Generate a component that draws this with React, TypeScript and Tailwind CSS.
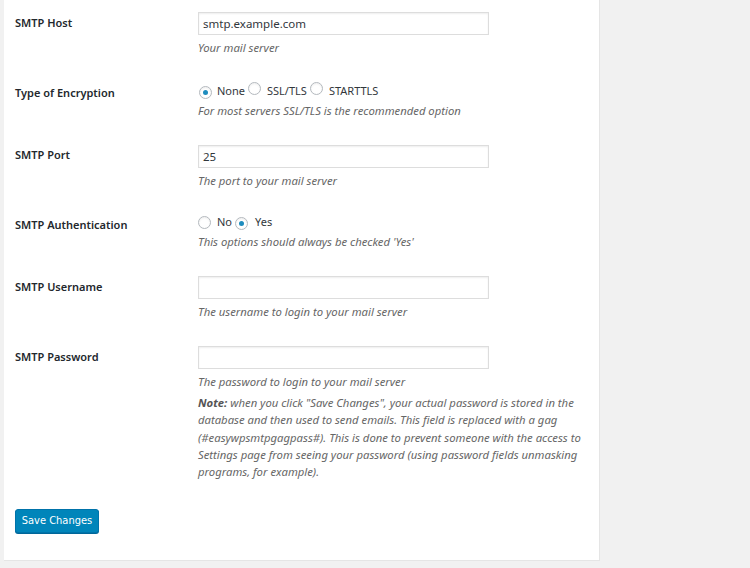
import React from "react";

const font = { fontFamily: '"Noto Sans", "Open Sans", sans-serif' };

function Radio({ checked }: { checked?: boolean }) {
  return (
    <span className="inline-flex items-center justify-center w-[13px] h-[13px] rounded-full border border-[#b4b9be] bg-white shadow-[inset_0_1px_2px_rgba(0,0,0,0.07)] shrink-0">
      {checked && <span className="w-[5px] h-[5px] rounded-full bg-[#1e8cbe]" />}
    </span>
  );
}

function Input({ value }: { value?: string }) {
  return (
    <div className="w-[291px] h-[23px] border border-[#dddddd] bg-white shadow-[inset_0_1px_2px_rgba(0,0,0,0.07)] flex items-center pl-[4px] text-[11.5px] text-[#32373c]">
      {value}
    </div>
  );
}

function Desc({ children, className = "" }: { children: React.ReactNode; className?: string }) {
  return <div className={`italic text-[11.3px] leading-[17px] text-[#666666] ${className}`}>{children}</div>;
}

function Label({ children, mt }: { children: React.ReactNode; mt: string }) {
  return (
    <div className={`w-[183px] shrink-0 font-semibold text-[11px] leading-[17px] text-[#23282d] ${mt}`}>{children}</div>
  );
}

export default function App() {
  return (
    <div className="w-[750px] h-[568px] bg-[#f1f1f1] overflow-hidden" style={font}>
      <div className="ml-[4px] w-[596px] h-[561px] bg-white border-r border-b border-[#e5e5e5] pl-[11px] pt-[12px]">
        {/* SMTP Host */}
        <div className="flex">
          <Label mt="mt-[2px]">SMTP Host</Label>
          <div>
            <Input value="smtp.example.com" />
            <Desc className="mt-[4px]">Your mail server</Desc>
          </div>
        </div>

        {/* Encryption */}
        <div className="flex mt-[25px]">
          <Label mt="mt-[3px]">Type of Encryption</Label>
          <div>
            <div className="h-[20px] flex items-center text-[11px] text-[#32373c]">
              <span className="ml-[1px]"><Radio checked /></span>
              <span className="ml-[5px]">None</span>
              <span className="ml-[3px]"><Radio /></span>
              <span className="ml-[6px]">SSL/TLS</span>
              <span className="ml-[3px]"><Radio /></span>
              <span className="ml-[6px]">STARTTLS</span>
            </div>
            <Desc className="mt-[1px]">For most servers SSL/TLS is the recommended option</Desc>
          </div>
        </div>

        {/* Port */}
        <div className="flex mt-[26px]">
          <Label mt="mt-[1px]">SMTP Port</Label>
          <div>
            <Input value="25" />
            <Desc className="mt-[4px]">The port to your mail server</Desc>
          </div>
        </div>

        {/* Auth */}
        <div className="flex mt-[23px]">
          <Label mt="mt-[4px]">SMTP Authentication</Label>
          <div>
            <div className="h-[20px] flex items-center text-[11px] text-[#32373c]">
              <Radio />
              <span className="ml-[6px]">No</span>
              <span className="ml-[3px]"><Radio checked /></span>
              <span className="ml-[7px]">Yes</span>
            </div>
            <Desc className="mt-[1px]">This options should always be checked 'Yes'</Desc>
          </div>
        </div>

        {/* Username */}
        <div className="flex mt-[26px]">
          <Label mt="mt-[2px]">SMTP Username</Label>
          <div>
            <Input />
            <Desc className="mt-[4px]">The username to login to your mail server</Desc>
          </div>
        </div>

        {/* Password */}
        <div className="flex mt-[26px]">
          <Label mt="mt-[2px]">SMTP Password</Label>
          <div>
            <Input />
            <Desc className="mt-[4px]">The password to login to your mail server</Desc>
            <div className="mt-[4px] italic text-[11.3px] leading-[17.3px] text-[#666666]">
              <div>
                <span className="font-bold text-[#555555]">Note:</span> when you click "Save Changes", your actual password is stored in the
              </div>
              <div>database and then used to send emails. This field is replaced with a gag</div>
              <div>(#easywpsmtpgagpass#). This is done to prevent someone with the access to</div>
              <div>Settings page from seeing your password (using password fields unmasking</div>
              <div>programs, for example).</div>
            </div>
          </div>
        </div>

        <button
          className="mt-[29px] w-[84px] h-[24px] rounded-[3px] bg-[#0085ba] border border-[#0073aa] text-white text-[11px] flex items-center justify-center shadow-[0_1px_0_#006799]"
          style={{ fontFamily: '"DejaVu Sans Condensed", "Liberation Sans", sans-serif', fontStretch: "condensed" }}
        >
          Save Changes
        </button>
      </div>
    </div>
  );
}
